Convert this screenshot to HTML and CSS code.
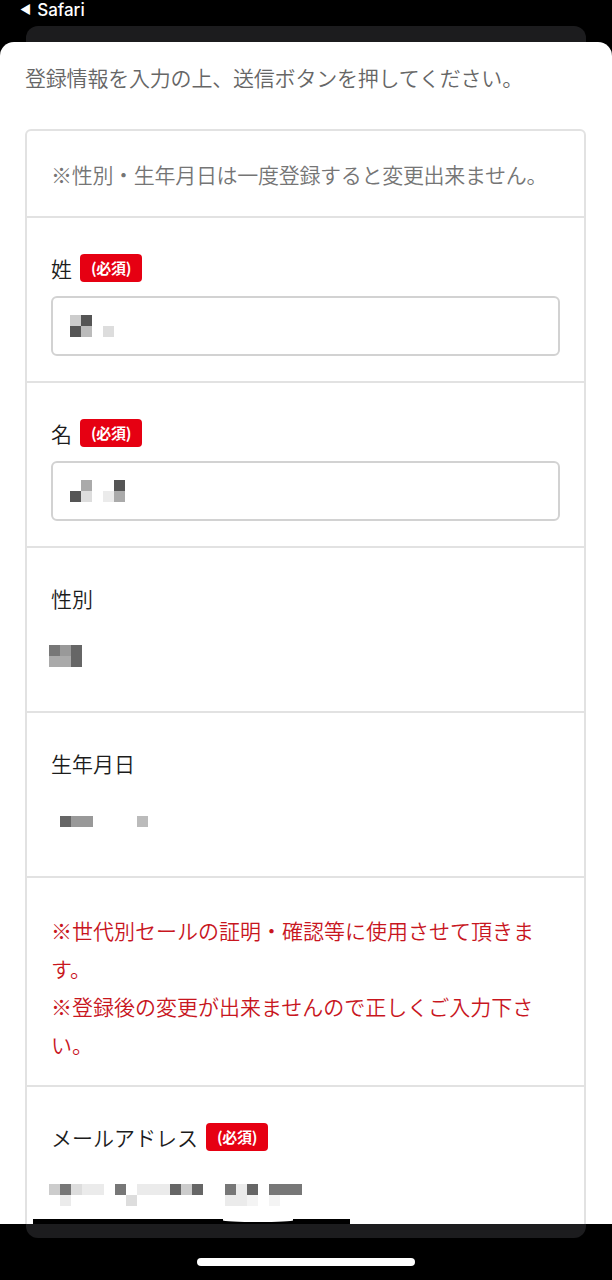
FILE: index.html
```html
<!DOCTYPE html>
<html lang="ja">
<head>
<meta charset="utf-8">
<title>登録情報</title>
<link rel="stylesheet" href="styles.css">
</head>
<body>
<div class="screen">
  <div class="statusbar"><span class="back">&#9664;</span><span class="app">Safari</span></div>
  <div class="card">
    <div class="sheet">
      <p class="intro">登録情報を入力の上、送信ボタンを押してください。</p>
      <div class="form">
        <div class="row note-row">※性別・生年月日は一度登録すると変更出来ません。</div>

        <div class="row">
          <div class="label">姓<span class="badge">(必須)</span></div>
          <div class="input">
            <div class="mosaic cols4">
              <span class="g"></span><span class="a"></span><span></span><span></span>
              <span class="a"></span><span class="f"></span><span></span><span class="h"></span>
            </div>
          </div>
        </div>

        <div class="row">
          <div class="label">名<span class="badge">(必須)</span></div>
          <div class="input">
            <div class="mosaic cols5">
              <span></span><span class="e"></span><span></span><span></span><span class="a"></span>
              <span class="a"></span><span class="h"></span><span></span><span class="i"></span><span class="e"></span>
            </div>
          </div>
        </div>

        <div class="row value-row">
          <div class="label">性別</div>
          <div class="value">
            <div class="mosaic cols3">
              <span class="c"></span><span class="d"></span><span class="b"></span>
              <span class="e"></span><span class="e"></span><span class="b"></span>
            </div>
          </div>
        </div>

        <div class="row value-row">
          <div class="label">生年月日</div>
          <div class="value">
            <div class="mosaic cols9">
              <span></span><span class="b"></span><span class="d"></span><span class="d"></span><span></span><span></span><span></span><span></span><span class="f"></span>
            </div>
          </div>
        </div>

        <div class="row warn-row">
          <p>※世代別セールの証明・確認等に使用させて頂きます。</p>
          <p>※登録後の変更が出来ませんので正しくご入力下さい。</p>
        </div>

        <div class="row value-row">
          <div class="label">メールアドレス<span class="badge">(必須)</span></div>
          <div class="value">
            <div class="mosaic cols23">
              <span class="g"></span><span class="c"></span><span class="h"></span><span class="i"></span><span class="i"></span><span></span><span class="c"></span><span></span><span class="i"></span><span class="i"></span><span class="i"></span><span class="b"></span><span class="g"></span><span class="b"></span><span></span><span></span><span class="c"></span><span class="i"></span><span class="b"></span><span></span><span class="c"></span><span class="c"></span><span class="c"></span>
              <span></span><span class="i"></span><span></span><span></span><span></span><span></span><span></span><span class="h"></span><span></span><span></span><span></span><span></span><span></span><span></span><span></span><span></span><span class="i"></span><span class="i"></span><span class="j"></span><span></span><span class="j"></span><span></span><span></span>
            </div>
          </div>
        </div>
      </div>
      <div class="mask-strip"><span class="bump"></span></div>
    </div>
  </div>
  <div class="home-indicator"></div>
</div>
</body>
</html>
```

FILE: styles.css
```css
* { box-sizing: border-box; }

html, body {
  margin: 0;
  padding: 0;
  background: #000;
}

body {
  font-family: "Noto Sans CJK JP", "Noto Sans", sans-serif;
  font-weight: 350;
}

.screen {
  width: 612px;
  height: 1280px;
  overflow: hidden;
  background: #000;
  display: flex;
  flex-direction: column;
}

.statusbar {
  height: 26px;
  padding-left: 20px;
  display: flex;
  align-items: flex-start;
  color: #fff;
  font-family: "Inter", "Roboto", sans-serif;
  font-size: 17px;
  line-height: 20px;
  font-weight: 500;
}

.statusbar .back {
  font-size: 12px;
  margin-right: 6px;
  line-height: 20px;
}

.card {
  margin: 0 26px;
  height: 1212px;
  background: #1c1c1e;
  border-radius: 12px;
  padding: 16px 0 14px;
  display: flex;
  flex-direction: column;
}

.sheet {
  position: relative;
  flex: 1;
  margin: 0 -26px;
  background: #fff;
  border-radius: 14px 14px 0 0;
  overflow: hidden;
}

.intro {
  margin: 20px 0 37px 25px;
  font-size: 21px;
  line-height: 30px;
  color: #666;
  letter-spacing: -0.2px;
}

.form {
  margin: 0 26px 0 25px;
  border: 2px solid #e2e2e2;
  border-radius: 6px;
}

.row {
  padding: 33px 24px 25px 24px;
  border-top: 2px solid #e2e2e2;
}

.row:first-child { border-top: none; }

.note-row {
  padding: 24px 24px 23px;
  font-size: 21px;
  line-height: 38px;
  color: #757575;
  letter-spacing: -0.3px;
}

.label {
  display: flex;
  align-items: center;
  height: 34px;
  font-size: 21px;
  color: #1c1c1c;
}

.badge {
  display: inline-block;
  height: 28px;
  line-height: 28px;
  padding: 0 11px;
  background: #e60012;
  color: #fff;
  font-size: 15px;
  font-weight: 700;
  border-radius: 4px;
  letter-spacing: -0.3px;
}

.label .badge { margin-left: 8px; }

.input {
  margin-top: 11px;
  height: 60px;
  border: 2px solid #d2d2d2;
  border-radius: 6px;
  padding-left: 17px;
  display: flex;
  align-items: center;
}

.value-row { padding-bottom: 33px; }

.value {
  margin-top: 19px;
  height: 44px;
  display: flex;
  align-items: center;
  margin-left: -2px;
}

.mosaic {
  display: grid;
  grid-auto-rows: 11px;
}

.cols3 { grid-template-columns: repeat(3, 11px); }
.cols4 { grid-template-columns: repeat(4, 11px); }
.cols5 { grid-template-columns: repeat(5, 11px); }
.cols9 { grid-template-columns: repeat(9, 11px); }
.cols23 { grid-template-columns: repeat(23, 11px); }

.mosaic .a { background: #555; }
.mosaic .b { background: #666; }
.mosaic .c { background: #777; }
.mosaic .d { background: #999; }
.mosaic .e { background: #aaa; }
.mosaic .f { background: #bbb; }
.mosaic .g { background: #ccc; }
.mosaic .h { background: #ddd; }
.mosaic .i { background: #ebebeb; }
.mosaic .j { background: #f4f4f4; }

.warn-row {
  padding: 33px 24px 22px 24px;
  color: #c8161e;
  font-size: 21px;
  line-height: 38px;
}

.warn-row p { margin: 0; }

.mask-strip {
  position: absolute;
  left: 33px;
  bottom: 0;
  width: 317px;
  height: 5px;
  background: #000;
}

.mask-strip .bump {
  position: absolute;
  left: 190px;
  top: 0;
  width: 70px;
  height: 3px;
  background: #fff;
  border-radius: 0 0 50% 50%;
}

.home-indicator {
  width: 218px;
  height: 8px;
  margin: 20px auto 0;
  background: #fff;
  border-radius: 4px;
}
```
